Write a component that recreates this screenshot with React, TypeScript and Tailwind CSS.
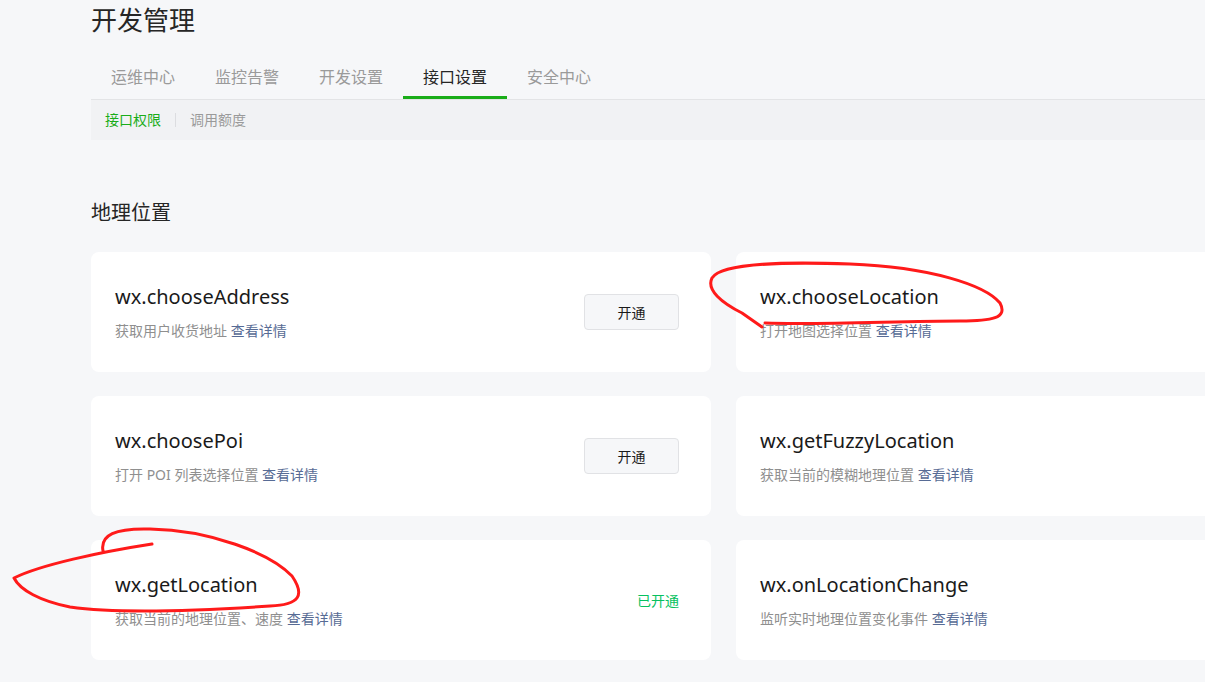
/** 开发管理 / 接口设置 — API permission cards for the 地理位置 group. */

type ApiCard = {
  name: string
  desc: string
  status: "open" | "enabled" | "none"
}

const tabs = ["运维中心", "监控告警", "开发设置", "接口设置", "安全中心"]

const cards: ApiCard[] = [
  { name: "wx.chooseAddress", desc: "获取用户收货地址", status: "open" },
  { name: "wx.chooseLocation", desc: "打开地图选择位置", status: "none" },
  { name: "wx.choosePoi", desc: "打开 POI 列表选择位置", status: "open" },
  { name: "wx.getFuzzyLocation", desc: "获取当前的模糊地理位置", status: "none" },
  { name: "wx.getLocation", desc: "获取当前的地理位置、速度", status: "enabled" },
  { name: "wx.onLocationChange", desc: "监听实时地理位置变化事件", status: "none" },
]

const font = "font-['Noto_Sans','Noto_Sans_CJK_SC',sans-serif]"

function Card({ card }: { card: ApiCard }) {
  return (
    <div className="flex h-[120px] items-center justify-between rounded-[8px] bg-white pr-[32px] pl-[24px]">
      <div className="flex flex-col gap-[11px]">
        <span className="text-[20px] leading-[26px] text-[#1a1a1a]">{card.name}</span>
        <span className="text-[14px] leading-[20px] text-[#8f8f8f]">
          {card.desc} <span className="text-[#576b95]">查看详情</span>
        </span>
      </div>
      {card.status === "open" && (
        <button className="h-[36px] w-[95px] rounded-[4px] border border-[#e1e2e5] bg-[#f6f7f9] text-[14px] text-[#1a1a1a]">
          开通
        </button>
      )}
      {card.status === "enabled" && (
        <span className="text-[14px] text-[#07c160]">已开通</span>
      )}
    </div>
  )
}

export default function App() {
  return (
    <div className={`relative h-[682px] w-[1205px] overflow-hidden bg-[#f6f7f9] ${font}`}>
      <div className="ml-[91px] w-[1265px]">
        <h1 className="text-[26px] leading-[40px] text-[#262626]">开发管理</h1>

        <nav className="mt-[16px] flex border-b border-[#e3e4e6]">
          {tabs.map((t) => {
            const active = t === "接口设置"
            return (
              <div
                key={t}
                className={`flex h-[43px] w-[104px] items-center justify-center border-b-[3px] pt-[2px] text-[16px] ${
                  active ? "border-[#1aad19] text-[#262626]" : "border-transparent text-[#9a9a9a]"
                }`}
              >
                {t}
              </div>
            )
          })}
        </nav>

        <div className="flex h-[40px] items-center bg-[#f1f2f4] pb-[1px] pl-[14px] text-[14px]">
          <span className="text-[#1aad19]">接口权限</span>
          <span className="mx-[14px] h-[14px] w-px bg-[#dcdde0]" />
          <span className="text-[#9a9a9a]">调用额度</span>
        </div>

        <h2 className="mt-[59px] mb-[25px] text-[20px] leading-[28px] text-[#262626]">地理位置</h2>

        <div className="grid grid-cols-[620px_620px] gap-x-[25px] gap-y-[24px]">
          {cards.map((c) => (
            <Card key={c.name} card={c} />
          ))}
        </div>
      </div>

      {/* hand-drawn red markup over the screenshot */}
      <svg
        className="pointer-events-none absolute inset-0"
        width="1205"
        height="682"
        viewBox="0 0 1205 682"
        fill="none"
        stroke="#ff1a1a"
        strokeWidth="3"
        strokeLinecap="round"
        strokeLinejoin="round"
      >
        <path d="M762,327 L742,313 C722,303 706,290 712,278 C722,262 790,262 850,264 C930,267 985,285 1000,303 C1008,318 992,321 960,321 C900,321 820,325 765,323" />
        <path d="M103,551 C100,535 115,528 150,529 C210,530 270,553 292,576 C305,595 300,605 270,606 C210,610 120,614 70,607 C40,601 20,590 14,578 C40,565 100,552 152,544" />
      </svg>
    </div>
  )
}
